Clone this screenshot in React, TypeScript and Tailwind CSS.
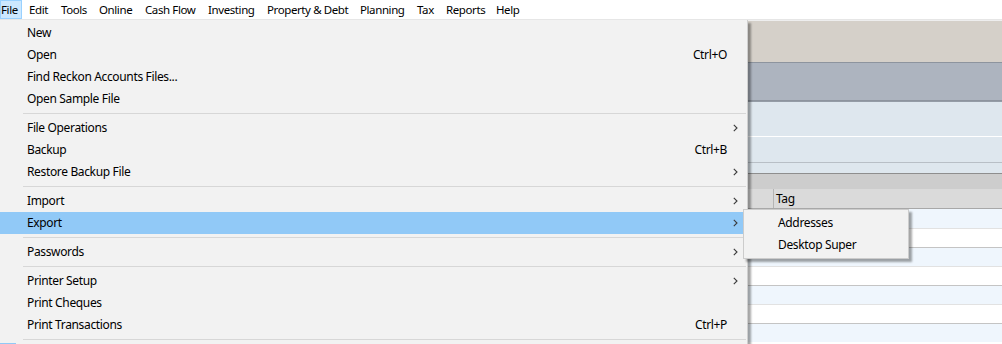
import React from "react";

const font = { fontFamily: '"Segoe UI", "Noto Sans", "Open Sans", sans-serif' };

function Chevron() {
  return (
    <svg width="5" height="8" viewBox="0 0 5 8" className="block">
      <path d="M0.8 0.8 L4 4 L0.8 7.2" fill="none" stroke="#3a3a3a" strokeWidth="1.1" />
    </svg>
  );
}

type Item =
  | { type: "sep" }
  | { type: "item"; label: string; shortcut?: string; sub?: boolean; active?: boolean };

const items: Item[] = [
  { type: "item", label: "New" },
  { type: "item", label: "Open", shortcut: "Ctrl+O" },
  { type: "item", label: "Find Reckon Accounts Files..." },
  { type: "item", label: "Open Sample File" },
  { type: "sep" },
  { type: "item", label: "File Operations", sub: true },
  { type: "item", label: "Backup", shortcut: "Ctrl+B" },
  { type: "item", label: "Restore Backup File", sub: true },
  { type: "sep" },
  { type: "item", label: "Import", sub: true },
  { type: "item", label: "Export", sub: true, active: true },
  { type: "sep" },
  { type: "item", label: "Passwords", sub: true },
  { type: "sep" },
  { type: "item", label: "Printer Setup", sub: true },
  { type: "item", label: "Print Cheques" },
  { type: "item", label: "Print Transactions", shortcut: "Ctrl+P" },
  { type: "sep" },
];

export default function App() {
  return (
    <div className="relative w-[1002px] h-[344px] overflow-hidden bg-white text-[12px] text-black tracking-[-0.35px]" style={font}>
      {/* menu bar */}
      <div className="flex h-[20px] border-b border-[#e6e6e6] bg-white leading-[19px] whitespace-nowrap text-[11.5px] tracking-[-0.4px]">
        <div className="w-[22px] h-[19px] bg-[#cce8ff] border border-[#99d1ff] leading-[17px]">File</div>
        <div className="w-[32px] pl-[7px]">Edit</div>
        <div className="w-[38px] pl-[7px]">Tools</div>
        <div className="w-[46px] pl-[7px]">Online</div>
        <div className="w-[63px] pl-[7px]">Cash Flow</div>
        <div className="w-[59px] pl-[7px]">Investing</div>
        <div className="w-[93px] pl-[7px]">Property &amp; Debt</div>
        <div className="w-[57px] pl-[7px]">Planning</div>
        <div className="w-[29px] pl-[7px]">Tax</div>
        <div className="w-[50px] pl-[7px]">Reports</div>
        <div className="w-[36px] pl-[7px]">Help</div>
      </div>

      {/* background app content */}
      <div className="flex flex-col">
        <div className="h-[42px] bg-[#d5d0c9] border-t border-[#eeeeee]" />
        <div className="h-[39px] bg-[#adb4bf] border-t border-[#8d949e] border-b" />
        <div className="h-[35px] bg-[#dee7ee] border-t border-[#949ca6]" />
        <div className="h-[26px] bg-[#dee7ee] border-t border-white" />
        <div className="h-[11px] bg-[#dee7ee] border-t border-[#b8bfc6]" />
        <div className="h-[16px] bg-[#cdcdcd] border-t border-[#8e8e8e]" />
        <div className="flex h-[20px] bg-[#dadada] border-b border-[#a8a8a8] leading-[19px]">
          <div className="w-[774px] border-r border-[#b4b4b4]" />
          <div className="pl-[2px]">Tag</div>
        </div>
        {[0, 1, 2, 3, 4, 5, 6].map((i) =>
          i % 2 === 0 ? (
            <div key={i} className={`h-[19px] bg-[#eff6fd] ${i === 0 ? "" : "border-t border-[#c4c4c4]"}`} />
          ) : (
            <div key={i} className="h-[19px] bg-white border-t border-[#e2e2e2]" />
          )
        )}
      </div>

      {/* File dropdown */}
      <div className="absolute left-0 top-[20px] w-[748px] h-[340px] bg-[#f2f2f2] border-r border-[#cfcfcf] pt-[2px] shadow-[3px_3px_2px_rgba(0,0,0,0.35)]">
        {items.map((it, i) =>
          it.type === "sep" ? (
            <div key={i} className="h-[7px] flex items-center">
              <div className="ml-[23px] mr-px h-px flex-1 bg-[#d7d7d7]" />
            </div>
          ) : (
            <div
              key={i}
              className={`flex h-[22px] items-center pl-[27px] ${it.active ? "bg-[#91c9f7]" : ""}`}
            >
              <div className="flex-1">{it.label}</div>
              <div>{it.shortcut ?? ""}</div>
              <div className="w-[20px] pl-[6px] flex items-center">{it.sub ? <Chevron /> : null}</div>
            </div>
          )
        )}
        <div className="h-[4px] w-[16px] bg-[#91c9f7]" />
      </div>

      {/* Export submenu */}
      <div className="absolute left-[743px] top-[209px] w-[166px] h-[50px] bg-[#f2f2f2] border border-[#cccccc] pt-[2px] shadow-[3px_3px_2px_rgba(0,0,0,0.35)]">
        <div className="flex h-[22px] items-center pl-[34px]">Addresses</div>
        <div className="flex h-[22px] items-center pl-[34px]">Desktop Super</div>
      </div>
    </div>
  );
}
